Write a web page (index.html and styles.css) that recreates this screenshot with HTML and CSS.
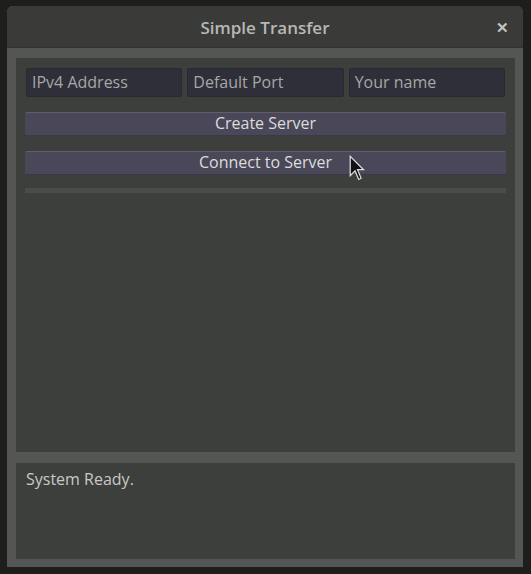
FILE: index.html
```html
<!DOCTYPE html>
<html>
<head>
<meta charset="utf-8">
<link rel="stylesheet" href="styles.css">
</head>
<body>
<div class="window">
  <div class="titlebar">
    <span class="title">Simple Transfer</span>
    <span class="close">&#x2715;</span>
  </div>
  <div class="content">
    <div class="main">
      <div class="inputs">
        <div class="field">IPv4 Address</div>
        <div class="field">Default Port</div>
        <div class="field">Your name</div>
      </div>
      <div class="btn">Create Server</div>
      <div class="btn btn2">Connect to Server</div>
      <div class="sep"></div>
    </div>
    <div class="status">System Ready.</div>
  </div>
</div>
<svg class="cursor" width="17" height="27" viewBox="0 0 14 22">
  <path d="M1 1 L1 17 L5 13 L8 20 L10 19 L7 12 L12 12 Z" fill="#111" stroke="#ddd" stroke-width="1"/>
</svg>
</body>
</html>
```
FILE: styles.css
```css
html, body {
  margin: 0;
  padding: 0;
  background: #1e1f1d;
  font-family: "Open Sans", "Noto Sans", sans-serif;
  width: 531px;
  height: 574px;
  overflow: hidden;
  position: relative;
}
.window {
  position: relative;
  margin: 6px 8px 0 7px;
  width: 516px;
  height: 561px;
  border-radius: 6px 6px 0 0;
  background: #545653;
  display: flex;
  flex-direction: column;
  overflow: hidden;
}
.titlebar {
  height: 42px;
  background: #3a3b39;
  display: flex;
  align-items: center;
  justify-content: center;
  position: relative;
  box-sizing: border-box;
  border-bottom: 1px solid #333432;
}
.title {
  color: #b7b8b5;
  font-size: 17px;
  font-weight: 600;
  margin-top: 1px;
}
.close {
  position: absolute;
  right: 14px;
  top: 11px;
  color: #c4c5c2;
  font-size: 15px;
  font-weight: 700;
}
.content {
  flex: 1;
  padding: 10px 8px 8px 9px;
  display: flex;
  flex-direction: column;
  gap: 11px;
}
.main {
  height: 394px;
  background: #3d3f3c;
  box-sizing: border-box;
  padding: 10px 9px 0 9px;
  display: flex;
  flex-direction: column;
}
.inputs {
  display: flex;
  gap: 5px;
  padding: 0 1px;
}
.field {
  flex: 1;
  height: 29px;
  box-sizing: border-box;
  background: #2f2f39;
  border: 1px solid #292930;
  border-radius: 2px;
  color: #a6a7a6;
  font-size: 16px;
  line-height: 27px;
  padding-left: 5px;
}
.btn {
  margin-top: 15px;
  height: 24px;
  box-sizing: border-box;
  background: #4a4858;
  border-top: 1px solid #605e6e;
  border-bottom: 1px solid #3a3947;
  border-radius: 2px;
  color: #dcdcdc;
  font-size: 16px;
  line-height: 20px;
  text-align: center;
}
.sep {
  margin-top: 13px;
  height: 5px;
  background: #4a4c49;
}
.status {
  flex: 1;
  background: #3d3f3c;
  color: #c8c9c6;
  font-size: 16px;
  padding: 5px 10px;
}
.cursor {
  position: absolute;
  left: 349px;
  top: 155px;
}
```
